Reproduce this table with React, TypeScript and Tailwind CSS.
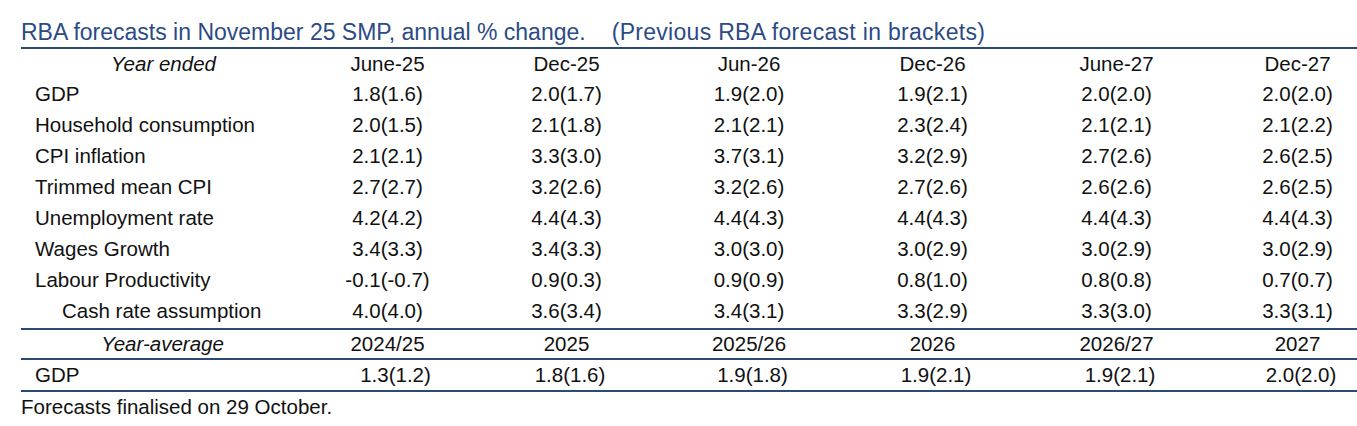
const cols = "grid grid-cols-[279px_175px_183px_182px_185px_183px_179px]";

const headers = ["June-25", "Dec-25", "Jun-26", "Dec-26", "June-27", "Dec-27"];

const rows: { label: string; indent?: boolean; values: string[] }[] = [
  { label: "GDP", values: ["1.8(1.6)", "2.0(1.7)", "1.9(2.0)", "1.9(2.1)", "2.0(2.0)", "2.0(2.0)"] },
  { label: "Household consumption", values: ["2.0(1.5)", "2.1(1.8)", "2.1(2.1)", "2.3(2.4)", "2.1(2.1)", "2.1(2.2)"] },
  { label: "CPI inflation", values: ["2.1(2.1)", "3.3(3.0)", "3.7(3.1)", "3.2(2.9)", "2.7(2.6)", "2.6(2.5)"] },
  { label: "Trimmed mean CPI", values: ["2.7(2.7)", "3.2(2.6)", "3.2(2.6)", "2.7(2.6)", "2.6(2.6)", "2.6(2.5)"] },
  { label: "Unemployment rate", values: ["4.2(4.2)", "4.4(4.3)", "4.4(4.3)", "4.4(4.3)", "4.4(4.3)", "4.4(4.3)"] },
  { label: "Wages Growth", values: ["3.4(3.3)", "3.4(3.3)", "3.0(3.0)", "3.0(2.9)", "3.0(2.9)", "3.0(2.9)"] },
  { label: "Labour Productivity", values: ["-0.1(-0.7)", "0.9(0.3)", "0.9(0.9)", "0.8(1.0)", "0.8(0.8)", "0.7(0.7)"] },
  { label: "Cash rate assumption", indent: true, values: ["4.0(4.0)", "3.6(3.4)", "3.4(3.1)", "3.3(2.9)", "3.3(3.0)", "3.3(3.1)"] },
];

const years = ["2024/25", "2025", "2025/26", "2026", "2026/27", "2027"];
const avgGdp = ["1.3(1.2)", "1.8(1.6)", "1.9(1.8)", "1.9(2.1)", "1.9(2.1)", "2.0(2.0)"];

export default function App() {
  return (
    <div
      className="w-[1357px] h-[426px] overflow-hidden bg-white text-[#111] text-[20.5px]"
      style={{ fontFamily: '"Liberation Sans", Arial, sans-serif' }}
    >
      <div className="w-[1366px] ml-[21px]">
        <div className="pt-[19px] pb-[2px] border-b-2 border-[#2d4a70] text-[23px] leading-[26px] text-[#2c4b85] whitespace-nowrap">
          RBA forecasts in November 25 SMP, annual % change.
          <span className="ml-[26px] tracking-[0.3px]">(Previous RBA forecast in brackets)</span>
        </div>

        <div className={`${cols} h-[31px] items-center leading-none`}>
          <div className="italic text-center pl-[6px]">Year ended</div>
          {headers.map((h) => (
            <div key={h} className="text-center">
              {h}
            </div>
          ))}
        </div>

        {rows.map((r) => (
          <div key={r.label} className={`${cols} h-[31px] items-center leading-none pb-[3px]`}>
            <div className={r.indent ? "pl-[41px]" : "pl-[14px]"}>{r.label}</div>
            {r.values.map((v, i) => (
              <div key={i} className="text-center">
                {v}
              </div>
            ))}
          </div>
        ))}

        <div className={`${cols} h-[32px] items-center leading-none border-t-2 border-b-2 border-[#2d4a70]`}>
          <div className="italic text-center pl-[4px]">Year-average</div>
          {years.map((y) => (
            <div key={y} className="text-center">
              {y}
            </div>
          ))}
        </div>

        <div className={`${cols} h-[32px] items-center leading-none border-b-2 border-[#2d4a70] pt-[1px]`}>
          <div className="pl-[14px]">GDP</div>
          {avgGdp.map((v, i) => (
            <div key={i} className={i === 0 ? "text-center pl-[16px]" : "text-center pl-[7px]"}>
              {v}
            </div>
          ))}
        </div>
      </div>

      <div className="ml-[21px] pt-[4px] leading-[22px] whitespace-nowrap">
        Forecasts finalised on 29 October.
      </div>
    </div>
  );
}
